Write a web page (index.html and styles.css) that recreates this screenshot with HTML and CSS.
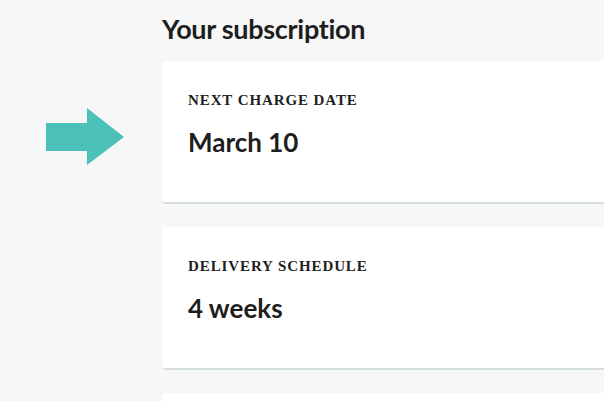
FILE: index.html
```html
<!doctype html>
<html lang="en">
<head>
    <meta charset="UTF-8">
    <title>Your subscription</title>
    <link rel="stylesheet" href="styles.css">
</head>
    <body>
        <div class="page">
            <div class="side">
                <svg class="arrow" width="80" height="58" viewBox="0 0 80 58">
                    <polygon points="0,15 41,15 41,0 78,29 41,57 41,43 0,43" fill="#4cc1b9"/>
                </svg>
            </div>
            <section class="main">
                <h1 class="subTitle">Your subscription</h1>
                <div class="card">
                    <div class="cardLabel">Next charge date</div>
                    <div class="cardValue">March 10</div>
                </div>
                <div class="card">
                    <div class="cardLabel">Delivery schedule</div>
                    <div class="cardValue">4 weeks</div>
                </div>
                <div class="card"></div>
            </section>
        </div>
    </body>
</html>
```

FILE: styles.css
```css
body {
    margin: 0;
    background-color: #f7f7f7;
    font-family: Lato, "Open Sans", sans-serif;
    color: #1e1e1e;
}

.page {
    display: flex;
    height: 401px;
    overflow: hidden;
}

.side {
    width: 162px;
    flex: none;
    padding-top: 108px;
    box-sizing: border-box;
}

.arrow {
    display: block;
    margin-left: 46px;
}

.main {
    flex: 1;
}

.subTitle {
    font-size: 27px;
    font-weight: 700;
    margin: 11px 0 14px 0;
    line-height: 36px;
    letter-spacing: -0.3px;
}

.card {
    background-color: #ffffff;
    border-radius: 4px 0 0 4px;
    border-bottom: 2px solid #d6dfdf;
    height: 141px;
    margin-bottom: 23px;
    padding: 0 26px;
}

.cardLabel {
    font-family: "Liberation Serif", serif;
    font-weight: 700;
    font-size: 15px;
    text-transform: uppercase;
    letter-spacing: 0.9px;
    padding-top: 31px;
    line-height: 16px;
}

.cardValue {
    font-size: 26px;
    font-weight: 700;
    margin-top: 19px;
    line-height: 30px;
}
```
